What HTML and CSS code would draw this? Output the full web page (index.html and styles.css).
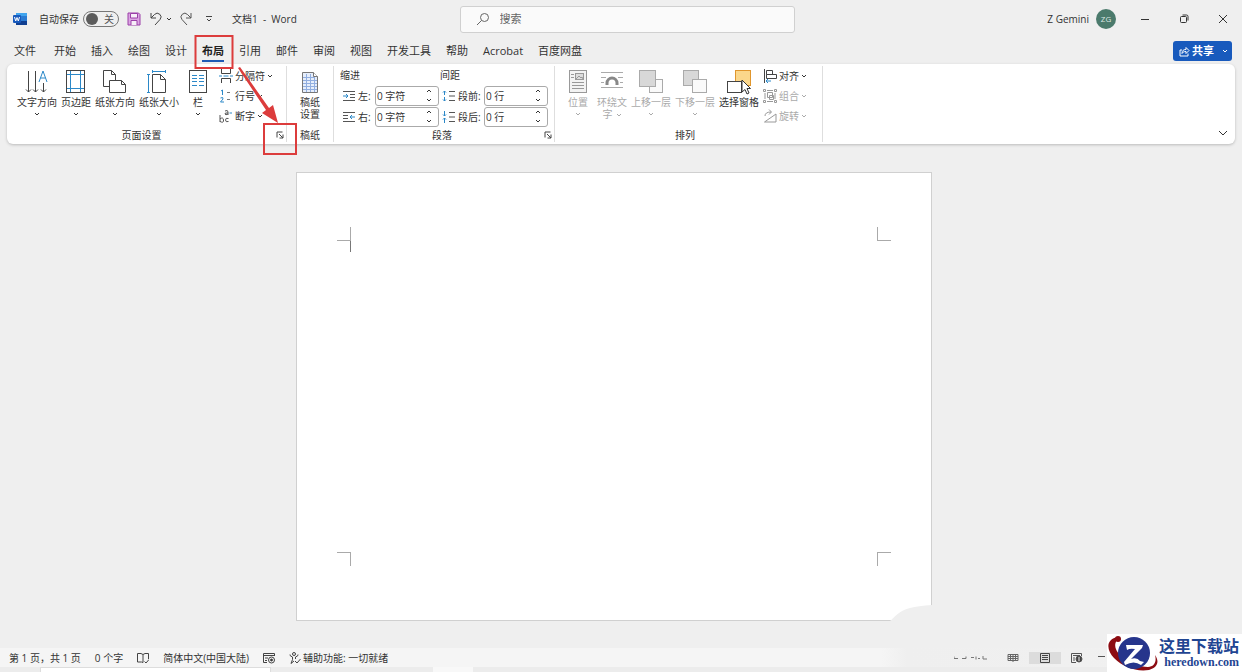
FILE: index.html
```html
<!DOCTYPE html>
<html lang="zh-CN">
<head>
<meta charset="UTF-8">
<title>文档1 - Word</title>
<link rel="stylesheet" href="styles.css">
</head>
<body>

<!-- shared symbols -->
<svg class="symbols" aria-hidden="true">
  <symbol id="down" viewBox="0 0 6 4"><path d="M1 1l2 2 2-2" fill="none" stroke="currentColor"/></symbol>
  <symbol id="up" viewBox="0 0 6 4"><path d="M1 3l2-2 2 2" fill="none" stroke="currentColor"/></symbol>
  <symbol id="launcher" viewBox="0 0 8 8"><path d="M1 6.500V1h5.500M3 3l4 4M7 3.500V7H3.500" fill="none" stroke="#444"/></symbol>
</svg>

<header class="titlebar">
  <div class="title-left">
    <svg class="word-logo" width="14" height="14" viewBox="0 0 14 14">
      <rect x="3" y="1" width="11" height="12" rx="1" fill="#2b7cd3"/>
      <path d="M3 1h11v3H3z" fill="#41a5ee"/>
      <path d="M3 9h11v4H3z" fill="#103f91"/>
      <rect y="3" width="8" height="8" rx="1" fill="#185abd"/>
      <path d="M1.500 5l1.200 4L4 5.500 5.300 9l1.200-4" fill="none" stroke="#fff"/>
    </svg>
    <span class="autosave">自动保存</span>
    <label class="toggle"><input type="checkbox" aria-label="自动保存"><span>关</span></label>
    <button class="icon-button" aria-label="保存">
      <svg width="14" height="14" viewBox="0 0 14 14" fill="#dba5e3" stroke="#9b3fa8">
        <path d="M1 1h10.500L13 2.500V13H1z"/>
        <path d="M3.500 1.500h7V6h-7zM4 13V8.500h6V13" fill="#f7eef8"/>
      </svg>
    </button>
    <button class="icon-button undo" aria-label="撤消">
      <svg width="14" height="14" viewBox="0 0 14 14" fill="none" stroke="#444"><path d="M2 1v5h5M2 6l3.500-3.500a3.700 3.700 0 0 1 5.500 5L6 13"/></svg>
      <svg width="6" height="4"><use href="#down"/></svg>
    </button>
    <button class="icon-button" aria-label="恢复">
      <svg width="14" height="14" viewBox="0 0 14 14" fill="none" stroke="#555"><path d="M12 1v5H7M12 6L8.500 2.500a3.700 3.700 0 0 0-5.500 5L8 13"/></svg>
    </button>
    <button class="icon-button" aria-label="自定义快速访问工具栏">
      <svg width="8" height="8" viewBox="0 0 8 8" fill="none" stroke="#444"><path d="M1 1.500h6M2 4l2 2 2-2"/></svg>
    </button>
    <span class="doc-title">文档1&nbsp; -&nbsp; Word</span>
  </div>

  <label class="search">
    <svg width="14" height="14" viewBox="0 0 14 14" fill="none" stroke="#666"><circle cx="8.500" cy="5.500" r="4"/><path d="M5.500 8.500L1 13"/></svg>
    <input type="text" placeholder="搜索" aria-label="搜索">
  </label>

  <div class="title-right">
    <span>Z Gemini</span>
    <span class="avatar">ZG</span>
    <div class="window-buttons">
      <button aria-label="最小化"><svg width="10" height="10"><path d="M1 5.500h8" stroke="#333"/></svg></button>
      <button aria-label="还原"><svg width="10" height="10" viewBox="0 0 10 10" fill="none" stroke="#333"><rect x="1.500" y="2.500" width="6" height="6" rx="1"/><path d="M3.500 1h4Q9 1 9 2.500v4"/></svg></button>
      <button aria-label="关闭"><svg width="10" height="10"><path d="M1 1l8 8M9 1L1 9" stroke="#333"/></svg></button>
    </div>
  </div>
</header>

<nav class="tabs">
  <a class="file" href="#">文件</a>
  <a href="#">开始</a>
  <a href="#">插入</a>
  <a href="#">绘图</a>
  <a href="#">设计</a>
  <a class="active" href="#">布局</a>
  <a href="#">引用</a>
  <a href="#">邮件</a>
  <a href="#">审阅</a>
  <a href="#">视图</a>
  <a href="#">开发工具</a>
  <a href="#">帮助</a>
  <a href="#">Acrobat</a>
  <a href="#">百度网盘</a>
  <button class="share">
    <svg width="11" height="11" viewBox="0 0 11 11" fill="none" stroke="#fff"><path d="M3 4H1v6h8V7.500M3 7.500c0-3 1.500-4 4-4V1.500l3 3-3 3v-2c-2 0-3 .5-4 2z"/></svg>
    <span>共享</span>
    <svg width="6" height="4"><use href="#down"/></svg>
  </button>
</nav>

<section class="ribbon">
  <div class="group page-setup">
    <div class="tools">
      <button class="big">
        <svg width="24" height="26" viewBox="0 0 24 26" fill="none" stroke="#444"><path d="M3.500 2v21M1 20.500L3.500 23 6 20.500M10.500 2v21M8 20.500l2.500 2.500 2.500-2.500M18.500 14v9M16 20.500l2.500 2.500 2.500-2.500"/><path d="M14 13l4-11 4 11M15.500 9h5" stroke="#2b88c8"/></svg>
        <span>文字方向</span>
        <svg width="6" height="4"><use href="#down"/></svg>
      </button>
      <button class="big">
        <svg width="24" height="26" viewBox="0 0 24 26" fill="none"><rect x="2.500" y="1.500" width="18" height="22" stroke="#444"/><path d="M6.500 2v21M16.500 2v21M3 5.500h17M3 19.500h17" stroke="#2b88c8"/></svg>
        <span>页边距</span>
        <svg width="6" height="4"><use href="#down"/></svg>
      </button>
      <button class="big">
        <svg width="24" height="26" viewBox="0 0 24 26" fill="#fff" stroke="#444"><path d="M.500 1.500h8l4 4v12H.500zM8.500 1.500v4h4"/><path d="M6.500 11.500h12l4 4v8h-16zM18.500 11.500v4h4"/></svg>
        <span>纸张方向</span>
        <svg width="6" height="4"><use href="#down"/></svg>
      </button>
      <button class="big">
        <svg width="24" height="26" viewBox="0 0 24 26" fill="none" stroke="#444"><path d="M5.500 5.500h8l5 5v13h-13zM13.500 5.500v5h5"/><path d="M5 2.500h14M5.500 1v3M18.500 1v3M1.500 5v19M0 5.500h3M0 23.500h3" stroke="#2b88c8"/></svg>
        <span>纸张大小</span>
        <svg width="6" height="4"><use href="#down"/></svg>
      </button>
      <button class="big">
        <svg width="24" height="26" viewBox="0 0 24 26" fill="none"><rect x="3.500" y="1.500" width="17" height="22" stroke="#444"/><path d="M6 6.500h5M6 9.500h5M6 12.500h5M6 16.500h5M13 6.500h5M13 9.500h5M13 12.500h5M13 16.500h5" stroke="#2b88c8"/></svg>
        <span>栏</span>
        <svg width="6" height="4"><use href="#down"/></svg>
      </button>
      <div class="stack">
        <button class="small">
          <svg width="14" height="14" viewBox="0 0 14 14" fill="none" stroke="#444"><path d="M2.500 0v4.500h9V0M2.500 14V9.500h9V14"/><path d="M0 7h3M4.500 7h5M11 7h3" stroke="#2b88c8"/></svg>
          <span>分隔符</span>
          <svg width="6" height="4"><use href="#down"/></svg>
        </button>
        <button class="small">
          <svg width="14" height="14" viewBox="0 0 14 14" fill="none" stroke="#2b88c8"><path d="M2 2l1.500-1v5M1.500 9q3-1.500 2.500 1L1.500 13H5"/><path d="M8 3.500h3M8 10.500h3" stroke="#777"/></svg>
          <span>行号</span>
          <svg width="6" height="4"><use href="#down"/></svg>
        </button>
        <button class="small">
          <svg width="14" height="14" viewBox="0 0 14 14" fill="none" stroke="#555"><path d="M1 6v7M1 10q3-2.500 3.500 1T1 12.500M9.500 9.500q-3-1-3 1.500t3 1.500M6 2q3-1.500 3 1v3M9 4Q5.500 3.500 6 5t3 0"/><path d="M10.500 4H13" stroke="#2b88c8"/></svg>
          <span>断字</span>
          <svg width="6" height="4"><use href="#down"/></svg>
        </button>
      </div>
    </div>
    <div class="caption"><span>页面设置</span><button aria-label="页面设置对话框"><svg width="8" height="8"><use href="#launcher"/></svg></button></div>
  </div>

  <div class="group manuscript">
    <div class="tools">
      <button class="big">
        <svg width="24" height="26" viewBox="0 0 24 26"><path d="M4.500 3.500h11l4 4v16h-15z" fill="#e6eefb" stroke="#777"/><path d="M15.500 3.500v4h4" fill="#fff" stroke="#777"/><path d="M5 8.500h11M5 11.500h14M5 14.500h14M5 17.500h14M5 20.500h14M8.500 5v18M12.500 5v18M16.500 8v15" stroke="#91aee0"/></svg>
        <span>稿纸<br>设置</span>
      </button>
    </div>
    <div class="caption"><span>稿纸</span></div>
  </div>

  <div class="group paragraph">
    <div class="tools">
      <div class="fields indent">
        <h2>缩进</h2>
        <div class="field">
          <svg width="14" height="12" viewBox="0 0 14 12" fill="none" stroke="#555"><path d="M1 1.500h12M8 4.500h5M8 7.500h5M1 10.500h12"/><path d="M1 6h5M4 4l2 2-2 2" stroke="#2b88c8"/></svg>
          <label for="indentLeft">左:</label>
          <div class="spin"><input type="text" id="indentLeft" value="0 字符"><div><button aria-label="增加"><svg width="6" height="4"><use href="#up"/></svg></button><button aria-label="减少"><svg width="6" height="4"><use href="#down"/></svg></button></div></div>
        </div>
        <div class="field">
          <svg width="14" height="12" viewBox="0 0 14 12" fill="none" stroke="#555"><path d="M1 1.500h12M1 4.500h5M1 7.500h5M1 10.500h12"/><path d="M13 6H8M10 4L8 6l2 2" stroke="#2b88c8"/></svg>
          <label for="indentRight">右:</label>
          <div class="spin"><input type="text" id="indentRight" value="0 字符"><div><button aria-label="增加"><svg width="6" height="4"><use href="#up"/></svg></button><button aria-label="减少"><svg width="6" height="4"><use href="#down"/></svg></button></div></div>
        </div>
      </div>
      <div class="fields spacing">
        <h2>间距</h2>
        <div class="field">
          <svg width="14" height="12" viewBox="0 0 14 12" fill="none" stroke="#555"><path d="M7 1.500h6M7 6h6M7 10.500h6"/><path d="M2.500 5V1M1 2.500L2.500 1 4 2.500M2.500 7v4M1 9.500L2.500 11 4 9.500" stroke="#2b88c8"/></svg>
          <label for="spaceBefore">段前:</label>
          <div class="spin"><input type="text" id="spaceBefore" value="0 行"><div><button aria-label="增加"><svg width="6" height="4"><use href="#up"/></svg></button><button aria-label="减少"><svg width="6" height="4"><use href="#down"/></svg></button></div></div>
        </div>
        <div class="field">
          <svg width="14" height="12" viewBox="0 0 14 12" fill="none" stroke="#555"><path d="M7 1.500h6M7 6h6M7 10.500h6"/><path d="M2.500 0v5M1 3.500L2.500 5 4 3.500M2.500 12V7M1 8.500L2.500 7 4 8.500" stroke="#2b88c8"/></svg>
          <label for="spaceAfter">段后:</label>
          <div class="spin"><input type="text" id="spaceAfter" value="0 行"><div><button aria-label="增加"><svg width="6" height="4"><use href="#up"/></svg></button><button aria-label="减少"><svg width="6" height="4"><use href="#down"/></svg></button></div></div>
        </div>
      </div>
    </div>
    <div class="caption"><span>段落</span><button aria-label="段落对话框"><svg width="8" height="8"><use href="#launcher"/></svg></button></div>
  </div>

  <div class="group arrange">
    <div class="tools">
      <button class="big" disabled>
        <svg width="24" height="26" viewBox="0 0 24 26" fill="none" stroke="#999"><rect x="3.500" y="1.500" width="17" height="22" fill="#f3f3f3"/><rect x="9.500" y="4.500" width="8" height="6" fill="#ddd"/><path d="M10 10l3-3 2 2 1-1 1 2M5 5.500h3M5 8.500h3M6 13.500h12M6 16.500h12M6 19.500h12"/></svg>
        <span>位置</span>
        <svg width="6" height="4"><use href="#down"/></svg>
      </button>
      <button class="big" disabled>
        <svg width="24" height="26" viewBox="0 0 24 26" fill="none" stroke="#aaa"><path d="M1 3.500h22M1 8.500h5M18 8.500h5M1 13.500h3M20 13.500h3M1 18.500h22"/><path d="M7 16v-2a5 5 0 0 1 10 0v2" stroke="#888" stroke-width="3"/></svg>
        <span>环绕文<br>字<svg class="inline-arrow" width="6" height="4"><use href="#down"/></svg></span>
      </button>
      <button class="big" disabled>
        <svg width="24" height="26" viewBox="0 0 24 26" stroke="#aaa"><rect x="10.500" y="10.500" width="13" height="13" fill="#fafafa"/><rect x=".500" y="1.500" width="16" height="16" fill="#d8d8d8"/></svg>
        <span>上移一层</span>
        <svg width="6" height="4"><use href="#down"/></svg>
      </button>
      <button class="big" disabled>
        <svg width="24" height="26" viewBox="0 0 24 26" stroke="#aaa"><rect x=".500" y="1.500" width="15" height="15" fill="#d8d8d8"/><rect x="9.500" y="10.500" width="14" height="13" fill="#fafafa"/></svg>
        <span>下移一层</span>
        <svg width="6" height="4"><use href="#down"/></svg>
      </button>
      <button class="big">
        <svg width="24" height="26" viewBox="0 0 24 26"><rect x="8.500" y="1.500" width="15" height="15" fill="#fbd78b" stroke="#e0962d"/><rect x=".500" y="12.500" width="14" height="11" fill="#fff" stroke="#444"/><path d="M15 11v12l3-2.500 2 4.500 2-1-2-4.500h3.500z" fill="#fff" stroke="#333"/></svg>
        <span>选择窗格</span>
      </button>
      <div class="stack">
        <button class="small">
          <svg width="14" height="14" viewBox="0 0 14 14" fill="none" stroke="#444"><path d="M1.500 0v14M3.500 1.500h6v4h-6zM3.500 5.500h10v4h-10z"/><path d="M3 12h5M5 10l-2 2 2 2" stroke="#2b88c8"/></svg>
          <span>对齐</span>
          <svg width="6" height="4"><use href="#down"/></svg>
        </button>
        <button class="small" disabled>
          <svg width="14" height="14" viewBox="0 0 14 14" fill="none" stroke="#999"><path d="M4.500 3.500h5v5h-5zM6.500 6.500h4v4h-4z"/><path d="M2 4v6M12 4v6M4 1.500h6M4 12.500h6M.500.500h2v2h-2zM11.500.500h2v2h-2zM.500 11.500h2v2h-2zM11.500 11.500h2v2h-2z"/></svg>
          <span>组合</span>
          <svg width="6" height="4"><use href="#down"/></svg>
        </button>
        <button class="small" disabled>
          <svg width="14" height="14" viewBox="0 0 14 14" fill="none" stroke="#999"><path d="M13 5v8H1.500zM2 7q0-4 6-4M6 .500L8.500 3 6 5.500"/></svg>
          <span>旋转</span>
          <svg width="6" height="4"><use href="#down"/></svg>
        </button>
      </div>
    </div>
    <div class="caption"><span>排列</span></div>
  </div>

  <button class="collapse" aria-label="折叠功能区"><svg width="10" height="6" viewBox="0 0 10 6"><path d="M1 1l4 4 4-4" fill="none" stroke="#333"/></svg></button>
</section>

<main class="workspace">
  <div class="page">
    <i class="mark top-left"></i><i class="mark top-right"></i>
    <i class="caret"></i>
    <i class="mark bottom-left"></i><i class="mark bottom-right"></i>
    <svg class="torn" width="42" height="16" viewBox="0 0 42 16"><path d="M0 16C5 12 8 6 20 3Q28 1 42 0v16z" fill="#efefef"/></svg>
  </div>
</main>

<footer class="statusbar">
  <span class="pages">第 1 页，共 1 页</span>
  <span>0 个字</span>
  <svg width="12" height="12" viewBox="0 0 12 12" fill="none" stroke="#444"><path d="M6 10.500L4.500 10H.500V1.500H4L6 2.500l2-1h3.500V7M6 2.500v8M7.500 9.500l1.500 1.500 3-3.500"/></svg>
  <span>简体中文(中国大陆)</span>
  <svg width="12" height="12" viewBox="0 0 12 12" fill="none" stroke="#444"><path d="M4 10.500H.500v-9h11V4M1 3.500h10M2 6h3M2 8.500h2"/><circle cx="8.500" cy="8" r="3"/><circle cx="8.500" cy="8" r="1" fill="#222"/></svg>
  <span class="accessibility">
    <svg width="12" height="12" viewBox="0 0 12 12" fill="none" stroke="#444"><circle cx="5" cy="2" r="1.500"/><path d="M1 2.500Q.500 4 3.500 5v2.500L2 11.500 5 9M9 2.500Q9.500 4 6.500 5v2M6 9l2 2 3.500-4"/></svg>
    <span>辅助功能: 一切就绪</span>
  </span>
  <div class="views">
    <svg class="focus" width="34" height="6" viewBox="0 0 34 6" fill="none" stroke="#777"><path d="M0 1.500v2h4M8 3.500h4v-2M17 2.500h3M22 1.500v3M24 3.500h2M29 1v3h4"/></svg>
    <button aria-label="阅读视图"><svg width="12" height="10" viewBox="0 0 12 10" fill="none" stroke="#666"><path d="M1 1.500h10v6H1zM6 1v8M1 3.500h10M1 5.500h10M3.500 1v7M8.500 1v7"/></svg></button>
    <button class="selected" aria-label="页面视图"><svg width="12" height="10" viewBox="0 0 12 10" fill="none" stroke="#444"><path d="M1.500.500h9v9h-9zM3 2.500h6M3 4.500h6M3 6.500h6"/></svg></button>
    <button aria-label="Web 版式视图"><svg width="12" height="10" viewBox="0 0 12 10" fill="none" stroke="#555"><path d="M5 9.500H.500v-9h10V3M2 2.500h7M2 5h2M2 7h2"/><circle cx="8" cy="6" r="3" fill="#444"/><path d="M8 4v4" stroke="#eee"/></svg></button>
    <button class="zoom-out" aria-label="缩小"><svg width="8" height="10"><path d="M1 3.500h7" stroke="#555"/></svg></button>
  </div>
</footer>
<div class="taskbar"><i class="task-wide"></i><i class="task-short"></i></div>

<!-- red callouts: 布局 tab and the page setup launcher -->
<svg class="callouts" width="320" height="160" viewBox="0 0 320 160" fill="none" stroke="#dc3c3c" stroke-width="2">
  <rect x="195.500" y="36" width="37" height="32"/>
  <rect x="264" y="124" width="32" height="30"/>
  <path d="M238 68l2-1 29 41 4-3 5 18-16-10 4-3z" fill="#dc3c3c" stroke="none"/>
</svg>

<div class="watermark">
  <svg width="52" height="36" viewBox="0 0 52 36">
    <path d="M10 2C-2 5 0 16 7 23c9 9 22 14 35 12 8-2 11-8 6-15 2 7-1 12-7 12C22 31 2 16 10 5z" fill="#8c0c12"/>
    <circle cx="11" cy="4" r="3" fill="#8c0c12"/>
    <circle cx="27" cy="18" r="16" fill="#26358c"/>
    <path d="M19 10h17l-1 3-11 11q6-2 9 2l4 1-3 3q-7-5-16 0l-1-3 11-13q-5-1-8 1z" fill="#fff"/>
  </svg>
  <div class="watermark-text"><strong>这里下载站</strong><span>heredown.com</span></div>
</div>

</body>
</html>
```
FILE: styles.css
```css
* {
  box-sizing: border-box;
}

body {
  margin: 0;
  min-height: 100vh;
  display: flex;
  flex-direction: column;
  background-color: #efefef;
  color: #333;
  font-family: "Open Sans", "Noto Sans CJK SC", sans-serif;
  font-size: 10px;
  line-height: 12px;
}

button, input {
  margin: 0;
  padding: 0;
  border: 0;
  background: none;
  color: inherit;
  font: inherit;
}

svg {
  display: block;
  flex: none;
}

.symbols {
  display: none;
}

/* title bar */
.titlebar {
  height: 38px;
  display: grid;
  grid-template-columns: 37fr 27fr 36fr;
  align-items: center;
}

.title-left {
  display: flex;
  align-items: center;
  padding-left: 13px;
  white-space: nowrap;
}

.autosave {
  margin: 0 4px 0 12px;
}

.toggle {
  width: 36px;
  height: 16px;
  margin-right: 8px;
  padding: 0 4px 0 2px;
  display: flex;
  align-items: center;
  justify-content: space-between;
  border: 1px solid #777;
  border-radius: 8px;
  color: #555;
}

.toggle input {
  appearance: none;
  width: 12px;
  height: 12px;
  border-radius: 50%;
  background-color: #5c5c5c;
}

.icon-button {
  display: flex;
  align-items: center;
  gap: 3px;
  margin-right: 8px;
}

.icon-button + .icon-button {
  margin-right: 12px;
}

.icon-button.undo {
  margin-right: 7px;
}

.doc-title {
  margin-left: 7px;
}

.search {
  height: 27px;
  display: flex;
  align-items: center;
  gap: 10px;
  padding-left: 15px;
  border: 1px solid #d0d0d0;
  border-radius: 3px;
  background-color: #fafafa;
  font-size: 11px;
}

.search input {
  flex: 1;
  outline: none;
}

.search input::placeholder {
  color: #666;
}

.title-right {
  display: flex;
  align-items: center;
  justify-content: flex-end;
}

.avatar {
  width: 20px;
  height: 20px;
  margin: 0 9px 0 7px;
  border-radius: 50%;
  background-color: #4b7a6c;
  color: #dce8e4;
  font-size: 8px;
  line-height: 20px;
  text-align: center;
}

.window-buttons {
  display: flex;
}

.window-buttons button {
  width: 39px;
  height: 38px;
  display: flex;
  align-items: center;
  justify-content: center;
}

/* ribbon tabs */
.tabs {
  height: 26px;
  display: flex;
  align-items: center;
  gap: 15px;
  padding: 0 10px 0 14px;
  font-size: 11px;
}

.tabs a {
  padding: 4px 0 3px;
  border-bottom: 2px solid transparent;
  color: #333;
  text-decoration: none;
  white-space: nowrap;
}

.tabs .file {
  margin-right: 3px;
}

.tabs .active {
  border-color: #1f5bb5;
  color: #222;
  font-weight: bold;
}

.share {
  height: 20px;
  margin-left: auto;
  padding: 0 4px 0 6px;
  display: flex;
  align-items: center;
  gap: 2px;
  border-radius: 3px;
  background-color: #185abd;
  color: #fff;
  font-weight: bold;
}

.share span {
  margin-right: 6px;
}

/* ribbon */
.ribbon {
  margin: 0 7px;
  display: flex;
  border-radius: 6px;
  background-color: #fff;
  box-shadow: 0 1px 3px #bbb;
}

.group {
  display: flex;
  flex-direction: column;
  margin: 2px 0;
  border-right: 1px solid #dedede;
}

.tools {
  height: 62px;
  display: flex;
  gap: 4px;
}

.big {
  min-width: 30px;
  display: flex;
  flex-direction: column;
  align-items: center;
  justify-content: flex-start;
  padding-top: 3px;
  white-space: nowrap;
}

.big span {
  margin: 1px 0 4px;
}

.big:disabled, .small:disabled {
  color: #aaa;
}

.inline-arrow {
  display: inline-block;
  margin-left: 3px;
  vertical-align: middle;
}

.small {
  height: 20px;
  display: flex;
  align-items: center;
  gap: 2px;
  white-space: nowrap;
}

.caption {
  height: 14px;
  display: flex;
  align-items: center;
}

.caption span {
  flex: 1;
  text-align: center;
}

.page-setup {
  padding: 0 2px 0 10px;
}

.page-setup .stack {
  padding: 0 11px 0 2px;
}

.page-setup .caption {
  margin-left: -10px;
}

.manuscript {
  padding: 0 8px;
}

.paragraph {
  padding: 0 2px 0 6px;
}

.paragraph .tools {
  gap: 1px;
  padding-right: 4px;
}

.arrange {
  padding: 0 15px 0 8px;
}

.fields h2 {
  height: 19px;
  margin: 0;
  font-size: 10px;
  font-weight: normal;
  line-height: 19px;
}

.field {
  height: 21px;
  display: flex;
  align-items: center;
  gap: 2px;
  padding-left: 2px;
}

.field label {
  white-space: nowrap;
}

.indent label {
  width: 15px;
}

.spacing label {
  width: 24px;
}

.spin {
  width: 64px;
  height: 20px;
  display: flex;
  border: 1px solid #aaa;
  border-radius: 3px;
}

.spin input {
  flex: 1;
  min-width: 0;
  padding-left: 1px;
}

.spin div {
  width: 12px;
  display: flex;
  flex-direction: column;
  justify-content: space-around;
}

.collapse {
  margin: auto 7px 8px auto;
}

/* document area */
.workspace {
  flex: 1;
  padding: 28px 15px 20px 0;
}

.page {
  position: relative;
  width: 90%;
  max-width: 636px;
  aspect-ratio: 636 / 449;
  margin: 0 auto;
  padding: 54px 40px;
  display: grid;
  grid-template-columns: auto auto;
  grid-template-rows: auto 1fr auto;
  justify-content: space-between;
  border: 1px solid #d0d0d0;
  background-color: #fff;
}

.mark {
  width: 14px;
  height: 14px;
  border: 0 solid #aaa;
}

.top-left {
  border-width: 0 1px 1px 0;
}

.top-right {
  border-width: 0 0 1px 1px;
}

.bottom-left {
  border-width: 1px 1px 0 0;
}

.bottom-right {
  border-width: 1px 0 0 1px;
}

.caret {
  grid-column: 1 / 3;
  width: 14px;
  height: 11px;
  border-right: 1px solid #777;
}

.torn {
  position: absolute;
  right: -1px;
  bottom: -1px;
}

/* status bar */
.statusbar {
  height: 19px;
  display: flex;
  align-items: center;
  gap: 14px;
  padding-left: 9px;
  background: linear-gradient(to right, #f5f5f5 71%, #efefef 73%, #f1f1f1);
  white-space: nowrap;
}

.accessibility {
  display: flex;
  align-items: center;
  gap: 2px;
}

.views {
  display: flex;
  align-items: center;
  margin: 0 137px 0 auto;
}

.views button {
  width: 32px;
  height: 12px;
  display: flex;
  align-items: center;
  justify-content: center;
}

.views .zoom-out {
  width: 12px;
  justify-content: flex-end;
}

.views .selected {
  background-color: #dcdcdc;
}

.focus {
  margin-right: 9px;
}

.taskbar {
  height: 5px;
  display: flex;
  padding-left: 40px;
  background-color: #ececec;
}

.task-wide {
  width: 231px;
  margin-right: 162px;
  border: 1px solid #ddd;
  border-bottom: 0;
  background-color: #fff;
}

.task-short {
  width: 40px;
  background-color: #f8f8f8;
}

/* floating layers */
.callouts {
  position: absolute;
  top: 0;
  left: 0;
  pointer-events: none;
}

.watermark {
  position: fixed;
  right: 0;
  bottom: 0;
  height: 38px;
  display: flex;
  align-items: center;
  padding-right: 3px;
  background-color: #fff;
  color: #1f4592;
}

.watermark-text {
  display: flex;
  flex-direction: column;
  align-items: flex-end;
}

.watermark strong {
  font-size: 16px;
  line-height: 18px;
}

.watermark-text span {
  font: bold 12px/14px "Liberation Serif", serif;
}
```
